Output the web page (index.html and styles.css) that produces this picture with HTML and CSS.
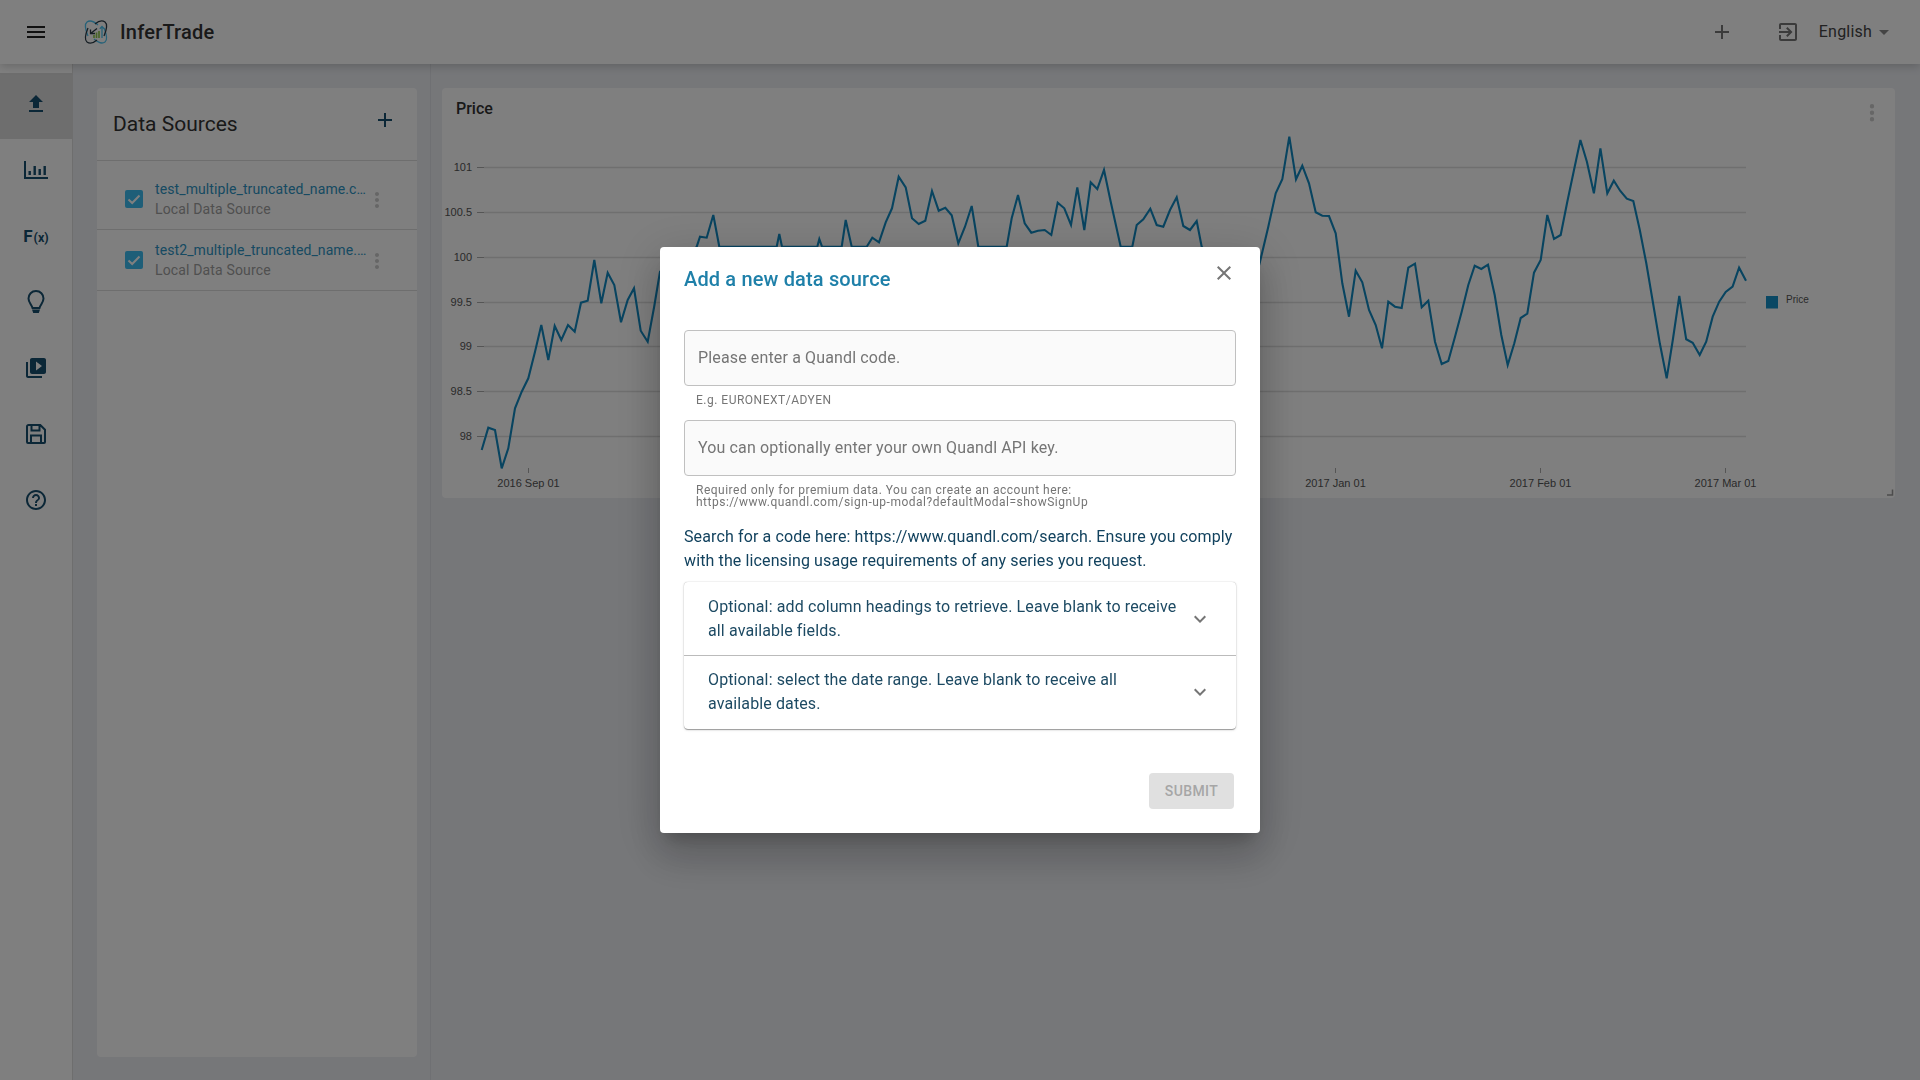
FILE: index.html
```html
<!DOCTYPE html>
<html lang="en">
<head>
<meta charset="utf-8">
<title>InferTrade</title>
<link rel="stylesheet" href="styles.css">
</head>
<body>
<div class="app">
  <header class="topbar">
    <svg class="icon menu-icon" viewBox="0 0 24 24"><path d="M3 18h18v-2H3v2zm0-5h18v-2H3v2zm0-7v2h18V6H3z"/></svg>
    <svg class="logo" viewBox="0 0 24 24" fill="none">
      <path d="M4 16C1.500 10 .5 4 3 2c2.500-1.800 7-.5 11 3M20 8c2.500 6 3.500 12 1 14-2.500 1.800-7 .5-11-3" stroke="#4cc4f2" stroke-width="1.300"/>
      <path d="M20 16C22.500 10 23.500 4 21 2c-2.500-1.800-6.500-1-10 2M4 8C1.500 14 .5 20 3 22c2.500 1.800 6.500 1 10-2" stroke="#2a3a46" stroke-width="1.300"/>
      <path d="M13 8.500L6.500 13.500M6.500 9.500v4h4.500" stroke="#2a3a46" stroke-width="1.300"/>
      <path d="M10 18v-3M12.500 18v-5.500M15 18v-7" stroke="#8cc84a" stroke-width="1.600"/>
      <path d="M18 18V6.500M15.800 8.700L18 6.500l2.200 2.200" stroke="#4cc4f2" stroke-width="1.300"/>
    </svg>
    <span class="brand">InferTrade</span>
    <div class="topbar-actions">
      <svg class="icon top-icon add-top" viewBox="0 0 24 24"><path d="M19 13h-6v6h-2v-6H5v-2h6V5h2v6h6v2z"/></svg>
      <svg class="icon top-icon exit-top" viewBox="0 0 24 24"><path d="M10.090 15.590L11.500 17l5-5-5-5-1.410 1.410L12.670 11H3v2h9.670l-2.580 2.590zM19 3H5c-1.110 0-2 .9-2 2v4h2V5h14v14H5v-4H3v4c0 1.100.890 2 2 2h14c1.100 0 2-.9 2-2V5c0-1.100-.9-2-2-2z"/></svg>
      <span class="lang">English</span>
      <svg class="icon top-icon caret" viewBox="0 0 24 24"><path d="M7 10l5 5 5-5z"/></svg>
    </div>
  </header>

  <div class="workspace">
    <nav class="sidebar">
      <div class="nav-item active"><svg class="icon nav-icon" viewBox="0 0 24 24"><path d="M9 16h6v-6h4l-7-7-7 7h4zm-4 2h14v2H5z"/></svg></div>
      <div class="nav-item"><svg class="icon nav-icon" viewBox="0 0 24 24"><path d="M0 3h2v16h22v2H0zM4.500 13h2.400v4H4.500zM9.500 8h2.400v9H9.500zM14.500 11h2.400v6h-2.400zM19.500 8h2.400v9h-2.400z"/></svg></div>
      <div class="nav-item"><span class="fx"><span class="fx-f">F</span><span class="fx-x">(x)</span></span></div>
      <div class="nav-item"><svg class="icon nav-icon" viewBox="0 0 24 24"><path class="stroke-only" d="M12 1C7.600 1 4.500 4.300 4.500 8.500c0 3.800 3 5.800 4 9.500h7c1-3.700 4-5.700 4-9.500C19.500 4.300 16.400 1 12 1z"/><path d="M8 19.500h8L14.800 23H9.200z"/></svg></div>
      <div class="nav-item"><svg class="icon nav-icon" viewBox="0 0 24 24"><path d="M4 6H2v14c0 1.100.9 2 2 2h14v-2H4V6zm16-4H8c-1.100 0-2 .9-2 2v12c0 1.100.9 2 2 2h12c1.100 0 2-.9 2-2V4c0-1.100-.9-2-2-2zm-8 12.500v-9l6 4.500-6 4.500z"/></svg></div>
      <div class="nav-item"><svg class="icon nav-icon" viewBox="0 0 24 24"><path class="stroke-only" d="M4.500 3h11.800L21 7.700V20a1 1 0 0 1-1 1H4a1 1 0 0 1-1-1V4.500A1.500 1.500 0 0 1 4.500 3zM7.500 3v5.500h8V3M7 21v-7.500h10V21"/></svg></div>
      <div class="nav-item"><svg class="icon nav-icon" viewBox="0 0 24 24"><path d="M11 18h2v-2h-2v2zm1-16C6.480 2 2 6.480 2 12s4.480 10 10 10 10-4.480 10-10S17.520 2 12 2zm0 18c-4.410 0-8-3.590-8-8s3.590-8 8-8 8 3.590 8 8-3.590 8-8 8zm0-14c-2.210 0-4 1.790-4 4h2c0-1.100.9-2 2-2s2 .9 2 2c0 2-3 1.750-3 5h2c0-2.250 3-2.500 3-5 0-2.210-1.790-4-4-4z"/></svg></div>
    </nav>

    <main class="content">
      <section class="panel sources">
        <div class="sources-head">
          <h2 class="sources-title">Data Sources</h2>
          <svg class="icon add-source" viewBox="0 0 24 24"><path d="M19 13h-6v6h-2v-6H5v-2h6V5h2v6h6v2z"/></svg>
        </div>
        <div class="source-row first">
          <span class="checkbox"><svg viewBox="0 0 18 18"><path d="M3.500 9.500l3.700 3.500 7.300-7.500" fill="none" stroke="#fff" stroke-width="2"/></svg></span>
          <div class="source-text">
            <div class="source-name">test_multiple_truncated_name.c…</div>
            <div class="source-sub">Local Data Source</div>
          </div>
          <svg class="icon kebab" viewBox="0 0 24 24"><path d="M12 8c1.100 0 2-.9 2-2s-.9-2-2-2-2 .9-2 2 .9 2 2 2zm0 2c-1.100 0-2 .9-2 2s.9 2 2 2 2-.9 2-2-.9-2-2-2zm0 6c-1.100 0-2 .9-2 2s.9 2 2 2 2-.9 2-2-.9-2-2-2z"/></svg>
        </div>
        <div class="source-row second">
          <span class="checkbox"><svg viewBox="0 0 18 18"><path d="M3.500 9.500l3.700 3.500 7.300-7.500" fill="none" stroke="#fff" stroke-width="2"/></svg></span>
          <div class="source-text">
            <div class="source-name">test2_multiple_truncated_name.…</div>
            <div class="source-sub">Local Data Source</div>
          </div>
          <svg class="icon kebab" viewBox="0 0 24 24"><path d="M12 8c1.100 0 2-.9 2-2s-.9-2-2-2-2 .9-2 2 .9 2 2 2zm0 2c-1.100 0-2 .9-2 2s.9 2 2 2 2-.9 2-2-.9-2-2-2zm0 6c-1.100 0-2 .9-2 2s.9 2 2 2 2-.9 2-2-.9-2-2-2z"/></svg>
        </div>
      </section>

      <div class="gutter"></div>

      <section class="panel chart-panel">
        <svg class="chart" viewBox="442 88 1453 410">
          <text class="chart-title" x="456" y="114">Price</text>
          <g class="grid">
            <path d="M484 167.500H1746M484 212.500H1746M484 257.500H1746M484 302.500H1746M484 346.500H1746M484 391.500H1746M484 436.500H1746"/>
          </g>
          <g class="ticks">
            <path d="M477 167.500h7M477 212.500h7M477 257.500h7M477 302.500h7M477 346.500h7M477 391.500h7M477 436.500h7"/>
            <path d="M528.500 468v5M1335.500 468v5M1540.500 468v5M1725.500 468v5"/>
          </g>
          <g class="y-labels">
            <text x="472" y="171">101</text>
            <text x="472" y="216">100.5</text>
            <text x="472" y="261">100</text>
            <text x="472" y="306">99.5</text>
            <text x="472" y="350">99</text>
            <text x="472" y="395">98.5</text>
            <text x="472" y="440">98</text>
          </g>
          <g class="x-labels">
            <text x="528.500" y="487">2016 Sep 01</text>
            <text x="1335.500" y="487">2017 Jan 01</text>
            <text x="1540.500" y="487">2017 Feb 01</text>
            <text x="1725.500" y="487">2017 Mar 01</text>
          </g>
          <polyline class="series" points="481.700,450 488.300,427.700 495,430 501.700,468.300 508.300,448.300 515,408.300 521.700,391.700 528.300,378.300 535,351.700 541.300,325 548.300,360 554.700,326 561.300,340 568,325 574.700,331.700 581,302.700 587.700,300.700 594.300,260 601.300,303.300 607.700,272.700 614.300,285 621,322.300 627.700,300 634,288.300 640.700,330.700 647.700,341.700 654.300,306 660,271.700 680,270 696.700,246.700 700,236.700 706.700,237.700 713.300,215 719.300,246.700 776.700,246.700 779.300,234 782,246.700 817.300,246.700 819.300,239 822,246.700 841.700,246.700 845.700,220 851.700,246.700 866.700,246.700 872.300,237.700 879,242.300 885.700,222.300 892,208.300 898.700,176.700 905.700,187.300 912,218.300 918.700,224 925.300,220.700 932,191 938.700,210.700 945.300,207.700 951.700,215.300 958.300,243.300 965,226.700 971.700,206 978.300,246.700 1006.700,246.700 1011.700,218.300 1018,195 1024.700,223.300 1031.300,232.700 1038,230.700 1044.700,230 1051.300,235 1057.700,202.700 1064.300,208.300 1071,225 1077.300,187.300 1084.300,230 1090.700,182.300 1097.300,189 1104,170 1110.700,201.700 1120.700,246.700 1132.300,246.700 1136.700,225 1143.300,219.300 1150.300,208.700 1156.700,225 1163.300,226.700 1170,210 1176.700,197.300 1183.300,226 1190,230 1196.700,221 1201.700,246.700 1250,300 1260,261.700 1268.300,226.700 1275.700,193.300 1282.300,179.300 1289.300,136.700 1296,179.300 1302.300,165.700 1309,183.300 1315.700,212.300 1322.300,215.700 1329,216 1335.700,233.300 1342.300,283.300 1349,316.700 1355.700,270.700 1362.300,282.300 1369,310 1375.700,325 1382,348.300 1388.300,301.700 1395,306.700 1401.700,308 1408.300,267.700 1415,263.700 1421.700,307.300 1428.300,300.700 1435,341.700 1441.700,364 1448.300,361 1455,336.700 1461.700,311.700 1468.300,285 1474.700,265.700 1481.300,269 1488,264.700 1494.700,295 1501.300,335 1507.700,365 1514.300,343.300 1520.700,318 1527.300,313.700 1534,272.700 1540.700,260 1547.300,215 1554,239 1560.700,235 1567.300,201.700 1574,170 1580.400,140 1586.900,161.700 1593.900,193.300 1600.400,148.300 1607.300,193.300 1613.800,180.700 1620.300,191 1626.800,198.700 1633.300,201 1639.800,230 1646.300,263.300 1652.800,301.700 1659.800,343.300 1666.700,378.300 1672.800,340 1679.300,296 1686.200,339.300 1692.700,342.700 1699.700,355 1706.200,341.700 1712.700,316.700 1719.200,301.700 1725.700,292 1732.600,286.700 1739.100,267.700 1746,280.700"/>
          <rect class="legend-swatch" x="1766" y="296" width="12" height="12.500"/>
          <text class="legend-label" x="1786" y="303">Price</text>
          <path class="dots" d="M1872 108.500a2.200 2.200 0 1 0 0-4.400 2.200 2.200 0 0 0 0 4.400zm0 2a2.200 2.200 0 1 0 0 4.400 2.200 2.200 0 0 0 0-4.400zm0 6.500a2.200 2.200 0 1 0 0 4.400 2.200 2.200 0 0 0 0-4.400z"/>
          <path class="resize-handle" d="M1892.500 489.500v5.500h-5.500"/>
        </svg>
      </section>
    </main>
  </div>
</div>

<div class="backdrop">
  <div class="dialog">
    <div class="dialog-head">
      <h2 class="dialog-title">Add a new data source</h2>
      <svg class="icon close" viewBox="0 0 24 24"><path d="M19 6.410L17.590 5 12 10.590 6.410 5 5 6.410 10.590 12 5 17.590 6.410 19 12 13.410 17.590 19 19 17.590 13.410 12z"/></svg>
    </div>
    <div class="dialog-body">
      <div class="text-input">Please enter a Quandl code.</div>
      <p class="helper">E.g. EURONEXT/ADYEN</p>
      <div class="text-input">You can optionally enter your own Quandl API key.</div>
      <p class="helper">Required only for premium data. You can create an account here: https://www.quandl.com/sign-up-modal?defaultModal=showSignUp</p>
      <p class="hint">Search for a code here: https://www.quandl.com/search. Ensure you comply with the licensing usage requirements of any series you request.</p>
      <div class="accordion">
        <div class="acc-item">
          <span class="acc-text">Optional: add column headings to retrieve. Leave blank to receive all available fields.</span>
          <svg class="icon chevron" viewBox="0 0 24 24"><path d="M16.590 8.590L12 13.170 7.410 8.590 6 10l6 6 6-6z"/></svg>
        </div>
        <div class="acc-item">
          <span class="acc-text">Optional: select the date range. Leave blank to receive all available dates.</span>
          <svg class="icon chevron" viewBox="0 0 24 24"><path d="M16.590 8.590L12 13.170 7.410 8.590 6 10l6 6 6-6z"/></svg>
        </div>
      </div>
      <div class="actions"><span class="submit">Submit</span></div>
    </div>
  </div>
</div>
</body>
</html>
```

FILE: styles.css
```css
* { box-sizing: border-box; }
html, body { margin: 0; height: 100%; }
body { font-family: Roboto, "Liberation Sans", sans-serif; background: #eceef3; color: #333; overflow: hidden; }
h2, p { margin: 0; }
.icon { display: block; width: 24px; height: 24px; flex: none; fill: #174e6e; }

.app { height: 100vh; display: flex; flex-direction: column; }

.topbar { height: 64px; flex: none; display: flex; align-items: center; padding-left: 24px; background: #fff; position: relative; z-index: 2; box-shadow: 0 2px 9px rgba(0,0,0,.2); }
.menu-icon { fill: #222; }
.logo { width: 24px; height: 24px; margin-left: 36px; overflow: visible; }
.brand { margin-left: 12px; font-size: 20px; font-weight: 500; color: #333; letter-spacing: .2px; }
.topbar-actions { margin-left: auto; display: flex; align-items: center; padding-right: 24px; }
.top-icon { fill: #777; }
.exit-top { margin-left: 42px; }
.lang { margin-left: 19px; font-size: 16px; color: #444; letter-spacing: .2px; position: relative; top: -1px; }
.caret { margin-left: 0; fill: #888; }

.workspace { flex: 1; display: flex; min-height: 0; }
.sidebar { width: 73px; flex: none; padding-top: 9px; background: #fff; border-right: 1px solid #dcdcdc; }
.nav-item { height: 66px; padding-top: 19px; display: flex; justify-content: center; }
.nav-item.active { background: #dcdcdc; }
.stroke-only { fill: none; stroke: #174e6e; stroke-width: 2; }
.fx { height: 24px; display: flex; align-items: center; font-weight: 700; color: #174e6e; }
.fx-f { font-size: 17px; }
.fx-x { font-size: 12.500px; margin-left: 1px; position: relative; top: 1px; }

.content { flex: 1; min-width: 0; display: flex; padding: 0 25px 0 24px; }
.panel { background: #fff; border-radius: 4px; margin: 24px 0 23px; }
.sources { width: 320px; flex: none; }
.sources-head { height: 73px; display: flex; padding: 0 20px 0 16px; border-bottom: 1px solid #dcdcdc; }
.sources-title { font-size: 21px; font-weight: 400; line-height: 26px; margin-top: 23px; color: #333; }
.add-source { margin-left: auto; margin-top: 20px; }
.source-row { display: flex; border-bottom: 1px solid #dcdcdc; padding-left: 28px; }
.source-row.first { height: 69px; padding-top: 18px; }
.source-row.second { height: 61px; padding-top: 10px; }
.checkbox { width: 18px; height: 18px; flex: none; margin-top: 11px; border-radius: 2px; background: #3cbcf0; display: block; }
.checkbox svg { display: block; width: 18px; height: 18px; }
.source-text { width: 212px; margin-left: 12px; }
.source-name { font-size: 14px; line-height: 20px; letter-spacing: .1px; color: #2e94c4; white-space: nowrap; }
.source-sub { font-size: 14px; line-height: 20px; letter-spacing: .15px; color: #a0a0a0; }
.kebab { fill: #ccc; margin-left: -2px; margin-top: 9px; }

.gutter { width: 14px; flex: none; margin-right: 11px; border-right: 1px solid #dfe1e6; }
.chart-panel { flex: 1; height: 410px; min-width: 0; }
.chart { display: block; width: 100%; height: 100%; }
.chart text { font-family: "Liberation Sans", Arial, sans-serif; font-size: 11px; fill: #555; }
.chart .chart-title { font-family: Roboto, sans-serif; font-size: 16px; font-weight: 500; fill: #333; }
.grid path { fill: none; stroke: #dedede; stroke-width: 1.500; }
.ticks path { fill: none; stroke: #aaa; stroke-width: 1; }
.y-labels text { text-anchor: end; }
.x-labels text { text-anchor: middle; }
.series { fill: none; stroke: #1088c0; stroke-width: 2.100; stroke-linejoin: miter; }
.legend-swatch { fill: #1490c8; }
.chart .legend-label { font-size: 10px; }
.dots { fill: #ccc; }
.resize-handle { fill: none; stroke: #999; stroke-width: 1.500; }

.backdrop { position: fixed; inset: 0; z-index: 10; background: rgba(0,0,0,.5); display: flex; align-items: center; justify-content: center; }
.dialog { width: 600px; height: 586px; background: #fff; border-radius: 4px; box-shadow: 0 11px 15px -7px rgba(0,0,0,.2), 0 24px 38px 3px rgba(0,0,0,.14), 0 9px 46px 8px rgba(0,0,0,.12); }
.dialog-head { display: flex; justify-content: space-between; align-items: flex-start; padding: 16px 24px; }
.dialog-title { font-size: 20px; line-height: 32px; font-weight: 500; color: #1f80a9; letter-spacing: .15px; }
.close { fill: #757575; margin-top: -2px; }
.dialog-body { padding: 19px 24px 0; }
.text-input { height: 56px; padding: 0 13px 2px; display: flex; align-items: center; background: #fafafa; border: 1px solid #c0c0c0; border-radius: 4px; font-size: 16px; letter-spacing: .14px; color: #757575; }
.helper { margin: 8px 0 14px; padding: 0 12px; font-size: 12px; line-height: 12px; letter-spacing: .5px; color: #757575; }
.hint { margin-top: 17px; font-size: 16px; line-height: 24px; letter-spacing: .12px; color: #12425e; }
.accordion { margin-top: 9px; border-radius: 4px; box-shadow: 0 0 1px rgba(0,0,0,.35), 0 2px 1px -1px rgba(0,0,0,.2), 0 1px 1px 0 rgba(0,0,0,.14), 0 1px 3px 0 rgba(0,0,0,.12); }
.acc-item { display: flex; align-items: center; justify-content: space-between; height: 73px; padding: 0 24px; }
.acc-item + .acc-item { border-top: 1px solid #bbb; height: 74px; padding-bottom: 1px; }
.acc-text { width: 473px; font-size: 16px; line-height: 24px; letter-spacing: .12px; color: #1d4a63; }
.chevron { fill: #757575; }
.actions { display: flex; justify-content: flex-end; margin-top: 44px; padding-right: 2px; }
.submit { width: 85px; height: 36px; display: flex; align-items: center; justify-content: center; background: #e0e0e0; border-radius: 4px; font-size: 14px; font-weight: 500; letter-spacing: .4px; text-transform: uppercase; color: #a6a6a6; }
```
